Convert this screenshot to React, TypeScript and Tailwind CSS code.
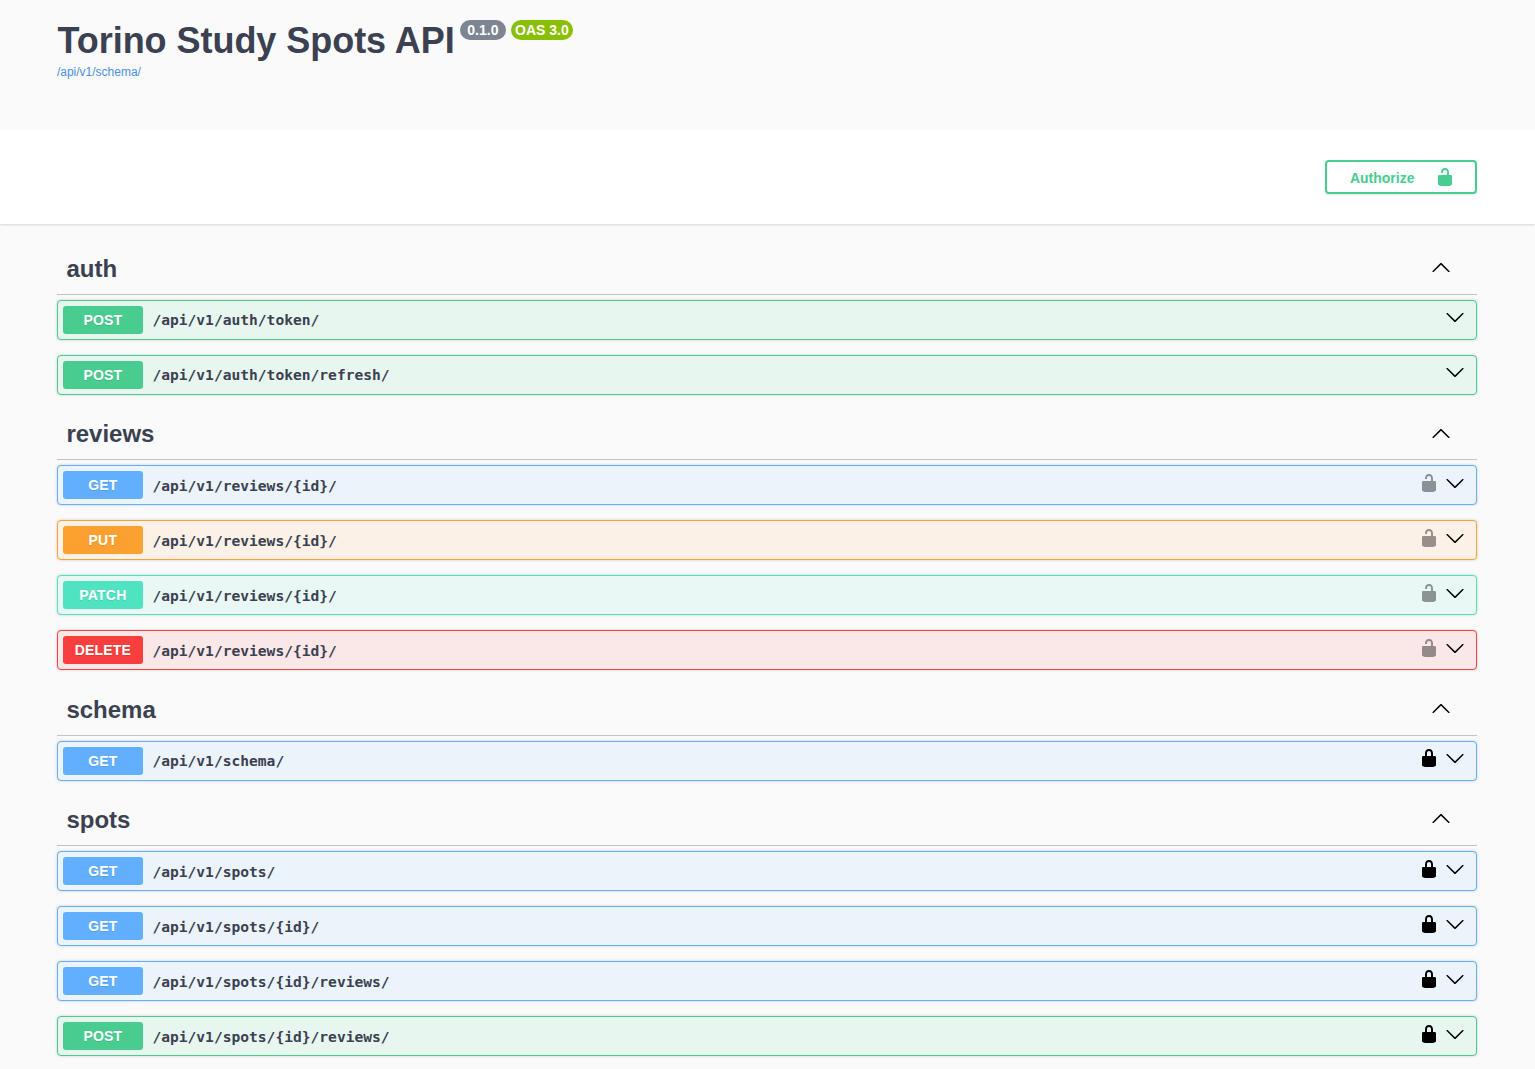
type Method = "GET" | "POST" | "PUT" | "PATCH" | "DELETE";
type Lock = "none" | "open" | "closed";

interface Operation {
  method: Method;
  path: string;
  lock: Lock;
}

const tags: { name: string; operations: Operation[] }[] = [
  {
    name: "auth",
    operations: [
      { method: "POST", path: "/api/v1/auth/token/", lock: "none" },
      { method: "POST", path: "/api/v1/auth/token/refresh/", lock: "none" },
    ],
  },
  {
    name: "reviews",
    operations: [
      { method: "GET", path: "/api/v1/reviews/{id}/", lock: "open" },
      { method: "PUT", path: "/api/v1/reviews/{id}/", lock: "open" },
      { method: "PATCH", path: "/api/v1/reviews/{id}/", lock: "open" },
      { method: "DELETE", path: "/api/v1/reviews/{id}/", lock: "open" },
    ],
  },
  {
    name: "schema",
    operations: [{ method: "GET", path: "/api/v1/schema/", lock: "closed" }],
  },
  {
    name: "spots",
    operations: [
      { method: "GET", path: "/api/v1/spots/", lock: "closed" },
      { method: "GET", path: "/api/v1/spots/{id}/", lock: "closed" },
      { method: "GET", path: "/api/v1/spots/{id}/reviews/", lock: "closed" },
      { method: "POST", path: "/api/v1/spots/{id}/reviews/", lock: "closed" },
    ],
  },
];

const blockStyles: Record<Method, string> = {
  GET: "border-[#61affe] bg-[#ebf3fb]",
  POST: "border-[#49cc90] bg-[#e8f6f0]",
  PUT: "border-[#fca130] bg-[#fbf1e6]",
  PATCH: "border-[#50e3c2] bg-[#e9f8f5]",
  DELETE: "border-[#f93e3e] bg-[#fae7e7]",
};

const badgeStyles: Record<Method, string> = {
  GET: "bg-[#61affe]",
  POST: "bg-[#49cc90]",
  PUT: "bg-[#fca130]",
  PATCH: "bg-[#50e3c2]",
  DELETE: "bg-[#f93e3e]",
};

const paths = {
  down: "M17.418 6.109c.272-.268.709-.268.979 0s.271.701 0 .969l-7.908 7.83c-.27.268-.707.268-.979 0l-7.908-7.83c-.27-.268-.27-.701 0-.969.271-.268.709-.268.979 0L10 13.25l7.418-7.141z",
  up: "M17.418 14.908c.272.268.709.268.979 0s.271-.701 0-.969l-7.908-7.83c-.27-.268-.707-.268-.979 0l-7.908 7.83c-.27.268-.27.701 0 .969.271.268.709.268.979 0L10 7.767l7.418 7.141z",
  open: "M15.8 8H14V5.6C14 2.703 12.665 1 10 1 7.334 1 6 2.703 6 5.6V6h2v-.801C8 3.754 8.797 3 10 3c1.203 0 2 .754 2 2.199V8H4c-.553 0-1 .646-1 1.199V17c0 .549.428 1.139.951 1.307l1.197.387C5.672 18.861 6.55 19 7.1 19h5.8c.549 0 1.428-.139 1.951-.307l1.196-.387c.524-.167.953-.757.953-1.306V9.199C17 8.646 16.352 8 15.8 8z",
  closed:
    "M15.8 8H14V5.6C14 2.703 12.665 1 10 1 7.334 1 6 2.703 6 5.6V8H4c-.553 0-1 .646-1 1.199V17c0 .549.428 1.139.951 1.307l1.197.387C5.672 18.861 6.55 19 7.1 19h5.8c.549 0 1.428-.139 1.951-.307l1.196-.387c.524-.167.953-.757.953-1.306V9.199C17 8.646 16.352 8 15.8 8zM12 8H8V5.199C8 3.754 8.797 3 10 3c1.203 0 2 .754 2 2.199V8z",
};

function Icon({ name, className = "" }: { name: keyof typeof paths; className?: string }) {
  return (
    <svg viewBox="0 0 20 20" width="20" height="20" fill="currentColor" className={`shrink-0 ${className}`}>
      <path d={paths[name]} />
    </svg>
  );
}

function OperationRow({ method, path, lock }: Operation) {
  return (
    <div
      className={`mb-[15px] flex h-10 items-center rounded-[4px] border px-[5px] shadow-[0_0_3px_rgba(0,0,0,0.19)] ${blockStyles[method]}`}
    >
      <span
        className={`h-7 w-20 rounded-[3px] text-center text-sm leading-7 font-bold tracking-[0.2px] text-white [text-shadow:0_1px_0_rgba(0,0,0,0.1)] ${badgeStyles[method]}`}
      >
        {method}
      </span>
      <span className="flex-1 pt-[0.8px] pr-2.5 pl-[9.5px] font-['DejaVu_Sans_Mono',monospace] text-[14.6px] leading-5 font-bold">
        {path}
      </span>
      <span className="mr-[6px] mb-[5px] flex items-center gap-[6px] text-black">
        {lock !== "none" && <Icon name={lock} className={lock === "open" ? "opacity-40" : ""} />}
        <Icon name="down" />
      </span>
    </div>
  );
}

export default function App() {
  return (
    <div className="h-[1069px] overflow-hidden bg-[#fafafa] font-['Liberation_Sans',Arial,sans-serif] text-[#3b4151]">
      <header className="mx-auto h-[130px] max-w-[1460px] pt-5 pr-[20.6px] pl-[19.4px]">
        <div className="flex items-start">
          <h1 className="ml-[0.6px] text-[36px] leading-[41px] font-bold tracking-[-0.04px] whitespace-nowrap">
            Torino Study Spots API
          </h1>
          <span className="ml-[5.3px] flex h-5 w-[46px] justify-center rounded-full bg-[#7d8492] text-sm leading-5 font-bold text-white">
            0.1.0
          </span>
          <span className="ml-[5px] flex h-5 w-[62px] justify-center rounded-full bg-[#89bf04] text-sm leading-5 font-bold text-white">
            OAS 3.0
          </span>
        </div>
        <a className="block text-xs leading-[22px] text-[#4990e2]">/api/v1/schema/</a>
      </header>

      <div className="bg-white py-[30px] shadow-[0_1px_2px_rgba(0,0,0,0.15)]">
        <div className="mx-auto flex max-w-[1460px] justify-end pr-[20.6px] pl-[19.4px]">
          <button className="flex h-[34px] w-[152px] items-center justify-between rounded-[4px] border-2 border-[#49cc90] pr-5 pl-[23px] text-sm font-bold text-[#49cc90] shadow-[0_1px_2px_rgba(0,0,0,0.1)]">
            <span className="pt-[2px]">Authorize</span>
            <Icon name="open" />
          </button>
        </div>
      </div>

      <main className="mx-auto max-w-[1460px] pt-[20.6px] pr-[20.6px] pl-[19.4px]">
        {tags.map((tag) => (
          <section key={tag.name}>
            <h2 className="mb-[5px] flex h-[50.4px] items-center justify-between border-b border-[#3b4151]/30 pr-[26px] pb-[0.5px] pl-[9.5px] text-2xl leading-7 font-bold">
              {tag.name}
              <Icon name="up" className="mb-[3.6px] text-black" />
            </h2>
            {tag.operations.map((op) => (
              <OperationRow key={op.method + op.path} {...op} />
            ))}
          </section>
        ))}
      </main>
    </div>
  );
}
